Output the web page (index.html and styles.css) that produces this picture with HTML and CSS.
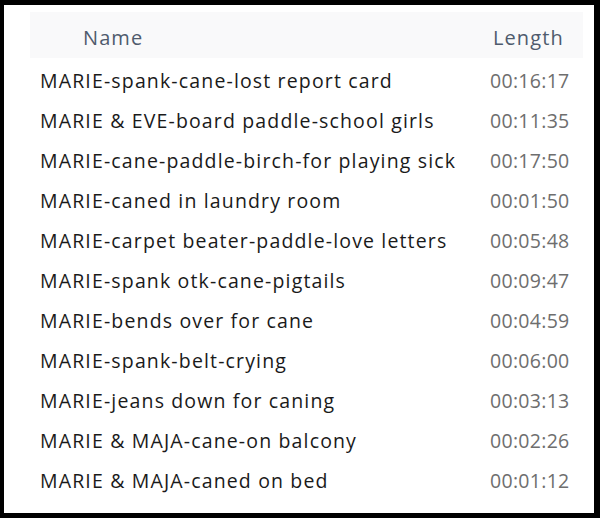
FILE: index.html
```html
<!DOCTYPE html>
<html>
<head>
<meta charset="utf-8">
<link rel="stylesheet" href="styles.css">
</head>
<body>
<div class="frame">
  <div class="header">
    <div class="h-name">Name</div>
    <div class="h-len">Length</div>
  </div>
  <div class="rows">
    <div class="row"><span class="name">MARIE-spank-cane-lost report card</span><span class="len">00:16:17</span></div>
    <div class="row"><span class="name">MARIE &amp; EVE-board paddle-school girls</span><span class="len">00:11:35</span></div>
    <div class="row"><span class="name">MARIE-cane-paddle-birch-for playing sick</span><span class="len">00:17:50</span></div>
    <div class="row"><span class="name">MARIE-caned in laundry room</span><span class="len">00:01:50</span></div>
    <div class="row"><span class="name">MARIE-carpet beater-paddle-love letters</span><span class="len">00:05:48</span></div>
    <div class="row"><span class="name">MARIE-spank otk-cane-pigtails</span><span class="len">00:09:47</span></div>
    <div class="row"><span class="name">MARIE-bends over for cane</span><span class="len">00:04:59</span></div>
    <div class="row"><span class="name">MARIE-spank-belt-crying</span><span class="len">00:06:00</span></div>
    <div class="row"><span class="name">MARIE-jeans down for caning</span><span class="len">00:03:13</span></div>
    <div class="row"><span class="name">MARIE &amp; MAJA-cane-on balcony</span><span class="len">00:02:26</span></div>
    <div class="row"><span class="name">MARIE &amp; MAJA-caned on bed</span><span class="len">00:01:12</span></div>
  </div>
</div>
</body>
</html>
```

FILE: styles.css
```css
html, body {
  margin: 0;
  padding: 0;
  background: #000;
  width: 600px;
  height: 518px;
  overflow: hidden;
}
.frame {
  margin: 5px 6px 0 4px;
  height: 508px;
  background: #fff;
  font-family: "Open Sans", "Noto Sans", sans-serif;
  padding-top: 7px;
  box-sizing: border-box;
}
.header {
  margin: 0 11px 0 26px;
  height: 46px;
  background: #f9f9fa;
  display: flex;
  align-items: center;
  font-size: 20px;
  letter-spacing: 1.1px;
  color: #4f5b6d;
  padding-top: 4px;
  box-sizing: border-box;
}
.h-name {
  padding-left: 53px;
  flex: 1;
}
.h-len {
  width: 90px;
}
.rows {
  padding-top: 2px;
}
.row {
  display: flex;
  height: 40px;
  align-items: center;
  font-size: 19.5px;
}
.name {
  padding-left: 36px;
  flex: 1;
  color: #1a1a1a;
  letter-spacing: 1.15px;
}
.len {
  width: 104px;
  color: #6e6e6e;
  letter-spacing: 0.3px;
}
```
